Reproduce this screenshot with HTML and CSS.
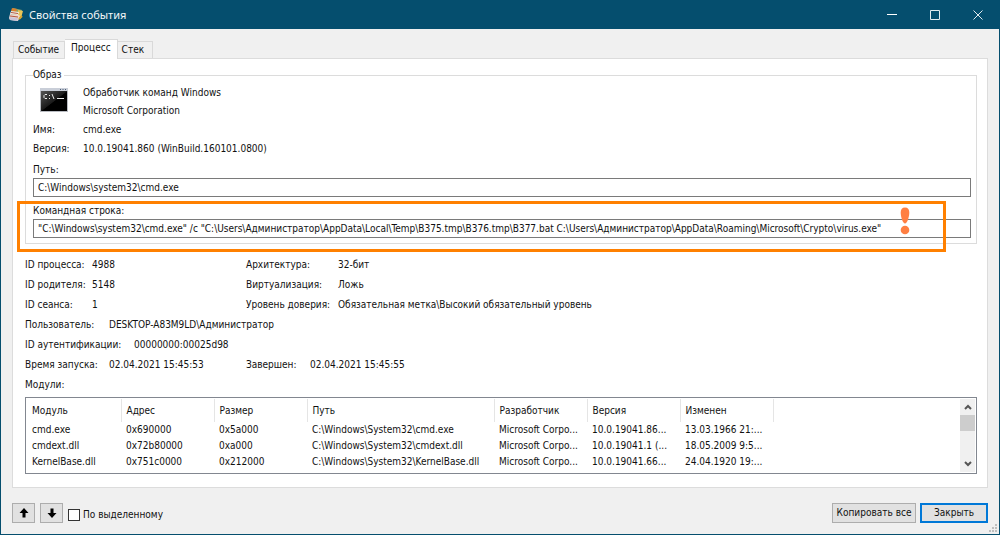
FILE: index.html
```html
<!DOCTYPE html>
<html lang="ru">
<head>
<meta charset="utf-8">
<title>Свойства события</title>
<link rel="stylesheet" href="styles.css">
</head>
<body>
<div class="window">
  <header class="titlebar">
    <svg class="app-icon" viewBox="0 0 16 16" width="16" height="16" aria-hidden="true">
      <path d="M5 1l9 2-1 8-3 2-6-5z" fill="#8ea56b"/>
      <path d="M4 1l5 1-1 3-5-1z" fill="#d9822f"/>
      <path d="M10 3l5 1-2 7-3 1z" fill="#e9c558"/>
      <path d="M3 4l8 1-1 3-8-1z" fill="#f4efe9"/>
      <path d="M2 7l9 1 1 1-2 5-8-1-1-2z" fill="#f0d9d0"/>
      <path d="M1 10l9 1-1 3-7-1z" fill="#c9c4d8"/>
      <path d="M3 5.500l7 1M2 9l8 1" stroke="#b4573f" fill="none"/>
      <path d="M11 12l3-3" stroke="#d7a42e" stroke-width="2"/>
    </svg>
    <h1 class="title">Свойства события</h1>
    <div class="window-buttons">
      <button class="window-button" aria-label="Свернуть"><svg width="10" height="10" viewBox="0 0 10 10"><path d="M0 4.500h10" stroke="#fff"/></svg></button>
      <button class="window-button" aria-label="Развернуть"><svg width="10" height="10" viewBox="0 0 10 10"><path d="M.5 .5h9v9h-9z" stroke="#e2ebef" fill="none"/></svg></button>
      <button class="window-button" aria-label="Закрыть окно"><svg width="10" height="10" viewBox="0 0 10 10"><path d="M.5 .5l9 9M9.500 .5l-9 9" stroke="#e2ebef"/></svg></button>
    </div>
  </header>

  <main class="content">
    <div class="tabs" role="tablist">
      <button class="tab" role="tab" aria-selected="false">Событие</button>
      <button class="tab tab-active" role="tab" aria-selected="true">Процесс</button>
      <button class="tab" role="tab" aria-selected="false">Стек</button>
    </div>

    <section class="panel" role="tabpanel">
      <fieldset class="image-group">
        <legend class="legend">Образ</legend>
        <div class="image-head">
          <svg class="cmd-icon" width="28" height="24" viewBox="0 0 28 24" aria-hidden="true">
            <defs><linearGradient id="shine" x1="0" y1="0" x2="1" y2="1"><stop offset="0" stop-color="#555"/><stop offset=".5" stop-color="#1a1a1a"/><stop offset=".52" stop-color="#000"/></linearGradient></defs>
            <rect width="28" height="24" fill="#b9bcc2"/>
            <rect x="0" y="0" width="28" height="3" fill="#c9ced8"/>
            <path d="M20 1.500h1M22.500 1.500h1M25 1.500h1" stroke="#4f6078"/>
            <rect x="1" y="3" width="26" height="20" fill="url(#shine)"/>
            <path d="M7 6.500h-2l-1 1v2l1 1h2M9.500 7v1M9.500 10v1M12 6l2 5M17 10.500h7" stroke="#eee" fill="none"/>
          </svg>
          <div class="image-names">
            <p class="line">Обработчик команд Windows</p>
            <p class="line">Microsoft Corporation</p>
          </div>
        </div>
        <dl class="image-facts">
          <dt>Имя:</dt><dd>cmd.exe</dd>
          <dt>Версия:</dt><dd>10.0.19041.860 (WinBuild.160101.0800)</dd>
        </dl>
        <div class="field">
          <label for="path">Путь:</label>
          <input id="path" class="text-input" type="text" readonly value="C:\Windows\system32\cmd.exe">
        </div>
        <div class="field field-marked">
          <label for="command">Командная строка:</label>
          <input id="command" class="text-input" type="text" readonly value="&quot;C:\Windows\system32\cmd.exe&quot; /c &quot;C:\Users\Администратор\AppData\Local\Temp\B375.tmp\B376.tmp\B377.bat C:\Users\Администратор\AppData\Roaming\Microsoft\Crypto\virus.exe&quot;">
          <div class="marker">
            <svg class="alert" width="10" height="28" viewBox="0 0 10 28" aria-hidden="true"><path d="M5 .5C8 .5 9.500 2.500 9.300 6 9 11 7 16.500 5 16.500S1 11 .7 6C.5 2.500 2 .5 5 .5z" fill="#ff7f42"/><circle cx="5" cy="23" r="4.300" fill="#ff7f42"/></svg>
          </div>
        </div>
      </fieldset>

      <dl class="details">
        <div class="pair"><dt class="key-short">ID процесса:</dt><dd>4988</dd></div>
        <div class="pair"><dt class="key-long">Архитектура:</dt><dd>32-бит</dd></div>
        <div class="pair"><dt class="key-short">ID родителя:</dt><dd>5148</dd></div>
        <div class="pair"><dt class="key-long">Виртуализация:</dt><dd>Ложь</dd></div>
        <div class="pair"><dt class="key-short">ID сеанса:</dt><dd>1</dd></div>
        <div class="pair"><dt class="key-long">Уровень доверия:</dt><dd>Обязательная метка\Высокий обязательный уровень</dd></div>
        <div class="pair pair-wide"><dt class="key-medium">Пользователь:</dt><dd>DESKTOP-A83M9LD\Администратор</dd></div>
        <div class="pair pair-wide"><dt class="key-auth">ID аутентификации:</dt><dd>00000000:00025d98</dd></div>
        <div class="pair"><dt class="key-medium">Время запуска:</dt><dd>02.04.2021 15:45:53</dd></div>
        <div class="pair"><dt class="key-end">Завершен:</dt><dd>02.04.2021 15:45:55</dd></div>
      </dl>

      <h2 class="modules-title" id="modules">Модули:</h2>
      <div class="list">
        <table class="modules" aria-labelledby="modules">
          <colgroup><col class="col-first"><col class="col"><col class="col"><col class="col-path"><col class="col"><col class="col"><col class="col"><col></colgroup>
          <thead><tr><th>Модуль</th><th>Адрес</th><th>Размер</th><th>Путь</th><th>Разработчик</th><th>Версия</th><th>Изменен</th><td></td></tr></thead>
          <tbody>
            <tr><td>cmd.exe</td><td>0x690000</td><td>0x5a000</td><td>C:\Windows\System32\cmd.exe</td><td>Microsoft Corpo...</td><td>10.0.19041.86...</td><td>13.03.1966 21:...</td><td></td></tr>
            <tr><td>cmdext.dll</td><td>0x72b80000</td><td>0xa000</td><td>C:\Windows\System32\cmdext.dll</td><td>Microsoft Corpo...</td><td>10.0.19041.1 (...</td><td>18.05.2009 9:5...</td><td></td></tr>
            <tr><td>KernelBase.dll</td><td>0x751c0000</td><td>0x212000</td><td>C:\Windows\System32\KernelBase.dll</td><td>Microsoft Corpo...</td><td>10.0.19041.66...</td><td>24.04.1920 19:...</td><td></td></tr>
          </tbody>
        </table>
        <div class="scrollbar">
          <button class="scroll-button" aria-label="Вверх"><svg width="8" height="6" viewBox="0 0 8 6"><path d="M1 5l3-3 3 3" stroke="#555" stroke-width="2" fill="none"/></svg></button>
          <div class="track"><div class="thumb"></div></div>
          <button class="scroll-button" aria-label="Вниз"><svg width="8" height="6" viewBox="0 0 8 6"><path d="M1 1l3 3 3-3" stroke="#555" stroke-width="2" fill="none"/></svg></button>
        </div>
      </div>
    </section>

    <footer class="footer">
      <button class="button button-arrow" aria-label="Предыдущее"><svg width="10" height="10" viewBox="0 0 10 10"><path d="M5 0l4.500 5H6.500v4.500h-3V5H.5z"/></svg></button>
      <button class="button button-arrow" aria-label="Следующее"><svg width="10" height="10" viewBox="0 0 10 10"><path d="M5 10l4.500-5H6.500V.5h-3V5H.5z"/></svg></button>
      <label class="check"><input class="check-box" type="checkbox">По выделенному</label>
      <button class="button button-copy">Копировать все</button>
      <button class="button button-close">Закрыть</button>
    </footer>
  </main>
  <svg class="grip" width="8" height="8" viewBox="0 0 8 8" aria-hidden="true"><path d="M6 0h2v2H6zM3 3h2v2H3zM6 3h2v2H6zM0 6h2v2H0zM3 6h2v2H3zM6 6h2v2H6z" fill="#bfbfbf"/></svg>
</div>
</body>
</html>
```
FILE: styles.css
```css
* { box-sizing: border-box; }

body {
  margin: 0;
  background: #f0f0f0;
  color: #111;
  font: 10px/16px "DejaVu Sans Condensed", "DejaVu Sans", sans-serif;
}

p, h1, h2, dl, dd { margin: 0; }

button, input {
  font: inherit;
  color: inherit;
}

.window {
  position: relative;
  display: flex;
  flex-direction: column;
  min-height: 100vh;
  border: 1px solid #054e6e;
  border-top: 0;
}

.titlebar {
  display: flex;
  align-items: center;
  height: 29px;
  padding-left: 7px;
  background: #054e6e;
  color: #f2f6f8;
}

.title {
  flex: 1;
  margin-left: 5px;
  font: 11px/16px "Noto Sans", sans-serif;
}

.window-buttons { display: flex; }

.window-button {
  display: flex;
  align-items: center;
  justify-content: center;
  width: 43px;
  height: 29px;
  padding: 0;
  border: 0;
  background: transparent;
}

.content {
  flex: 1;
  display: flex;
  flex-direction: column;
  padding: 10px 11px 11px;
}

.tabs {
  display: flex;
  align-items: flex-end;
  height: 19px;
  padding-left: 1px;
}

.tab {
  height: 17px;
  padding: 0 5px 0 4px;
  border: 1px solid #d9d9d9;
  border-bottom: 0;
  background: #f0f0f0;
  line-height: 16px;
}

.tab:last-child { padding-right: 8px; }

.tab + .tab { border-left: 0; }

.tab-active {
  z-index: 1;
  height: 20px;
  margin-bottom: -1px;
  padding: 0 6px 3px;
  background: #fff;
}

.panel {
  flex: 1;
  padding: 8px 10px 12px 12px;
  border: 1px solid #dcdcdc;
  background: #fff;
}

.image-group {
  min-width: 0;
  margin: 0;
  padding: 1px 5px 5px 7px;
  border: 1px solid #dcdcdc;
}

.legend {
  padding: 0 2px 0 0;
  line-height: 16px;
}

.image-head {
  display: flex;
  padding-left: 7px;
}

.cmd-icon { margin-top: 4px; }

.image-names { margin-left: 15px; }

.line { line-height: 18px; }

.image-facts {
  display: grid;
  grid-template-columns: 50px 1fr;
  line-height: 19px;
}

dt { white-space: nowrap; }

.field {
  display: flex;
  flex-direction: column;
  margin-top: 4px;
}

.text-input {
  width: 100%;
  height: 19px;
  padding: 0 4px;
  border: 1px solid #7a7a7a;
  background: #fff;
}

.field-marked {
  position: relative;
  margin-top: 6px;
}

.marker {
  position: absolute;
  inset: -2px 25px -14px -16px;
  border: 3px solid #ff8000;
  pointer-events: none;
}

.alert {
  position: absolute;
  top: 3px;
  right: 33px;
}

.details {
  display: grid;
  grid-template-columns: 221px 1fr;
  margin-top: 11px;
  line-height: 20px;
}

.pair {
  display: flex;
  white-space: nowrap;
}

.pair-wide { grid-column: 1 / -1; }

.key-short { width: 67px; }
.key-long { width: 92px; }
.key-medium { width: 84px; }
.key-auth { width: 109px; }
.key-end { width: 64px; }

.modules-title {
  font: inherit;
  line-height: 20px;
}

.list {
  display: flex;
  margin-top: 2px;
  padding: 1px;
  border: 1px solid #828790;
}

.modules {
  flex: 1;
  min-width: 0;
  width: 100%;
  margin-bottom: 2px;
  border-collapse: collapse;
  table-layout: fixed;
}

.col-first { width: 94px; }
.col { width: 93px; }
.col-path { width: 187px; }

.modules th,
.modules td {
  height: 16px;
  padding: 0 0 0 5px;
  overflow: hidden;
  line-height: 16px;
  font-weight: normal;
  text-align: left;
  white-space: nowrap;
}

.modules th {
  height: 23px;
  border-right: 1px solid #e5e5e5;
}

.scrollbar {
  display: flex;
  flex-direction: column;
  width: 15px;
  background: #f0f0f0;
}

.scroll-button {
  height: 16px;
  padding: 0;
  border: 0;
  background: transparent;
  line-height: 0;
}

.track { flex: 1; }

.thumb {
  height: 16px;
  background: #cdcdcd;
}

.footer {
  display: flex;
  align-items: center;
  margin-top: 15px;
}

.button {
  height: 20px;
  padding: 0;
  border: 1px solid #adadad;
  background: #e1e1e1;
  line-height: 16px;
}

.button-arrow {
  width: 23px;
  margin-right: 5px;
  line-height: 0;
}

.check {
  display: flex;
  align-items: center;
  gap: 3px;
  padding-top: 3px;
}

.check-box {
  appearance: none;
  width: 12px;
  height: 12px;
  margin: 0;
  border: 1px solid #333;
  background: #fff;
}

.check-box:checked { background: #0078d7; }

.button-copy {
  width: 84px;
  margin-left: auto;
}

.button-close {
  width: 68px;
  margin-left: 4px;
  border: 2px solid #0078d7;
}

.grip {
  position: absolute;
  right: 2px;
  bottom: 2px;
}
```
